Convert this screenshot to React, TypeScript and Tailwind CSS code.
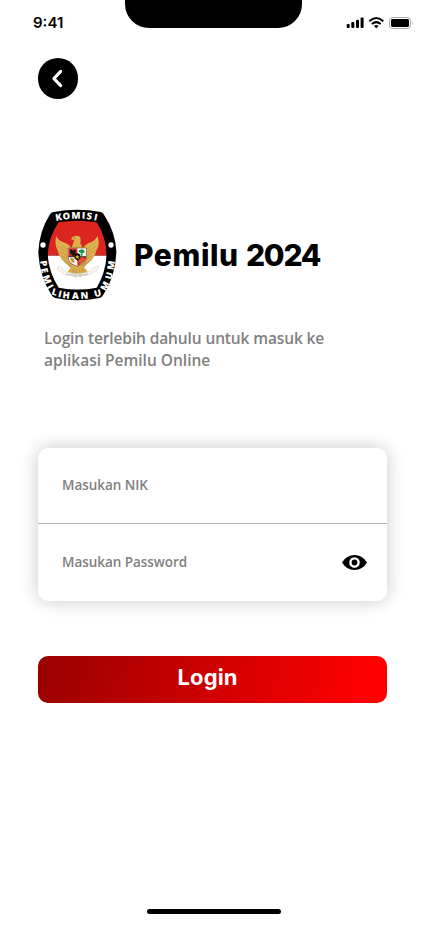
import React from "react";

type Glyph = { c: string; x: number; y: number; r: number };

const LETTERS: Glyph[] = [
  { c: "K", x: 86, y: 51, r: -10 },
  { c: "O", x: 109, y: 48, r: -6 },
  { c: "M", x: 138, y: 46, r: -1 },
  { c: "I", x: 161, y: 46, r: 3 },
  { c: "S", x: 178, y: 48, r: 7 },
  { c: "I", x: 197, y: 51, r: 12 },
  { c: "P", x: 41, y: 190, r: 82 },
  { c: "E", x: 44, y: 212, r: 78 },
  { c: "M", x: 52, y: 238, r: 70 },
  { c: "I", x: 61, y: 260, r: 60 },
  { c: "L", x: 74, y: 276, r: 18 },
  { c: "I", x: 90, y: 281, r: 12 },
  { c: "H", x: 109, y: 285, r: 7 },
  { c: "A", x: 136, y: 287, r: 1 },
  { c: "N", x: 163, y: 286, r: -4 },
  { c: "U", x: 203, y: 279, r: -14 },
  { c: "M", x: 225, y: 258, r: -62 },
  { c: "U", x: 237, y: 227, r: -73 },
  { c: "M", x: 243, y: 196, r: -80 },
];

function KpuLogo() {
  return (
    <svg className="block h-[92px] w-[80px] shrink-0" viewBox="24 27 240 276" aria-label="Komisi Pemilihan Umum">
      <defs>
        <clipPath id="shield">
          <path d="M86 67Q143 57 200 67Q229 112 230 165Q227 218 200 263Q143 275 86 263Q56 216 53 165Q55 112 86 67Z" />
        </clipPath>
        <linearGradient id="gold" x1="0" y1="0" x2="0" y2="1">
          <stop offset="0" stopColor="#e2b34a" />
          <stop offset="0.6" stopColor="#d7a84c" />
          <stop offset="1" stopColor="#c79a4c" />
        </linearGradient>
      </defs>
      <path d="M70 36Q142 22 212 36Q218 37 222 44Q256 96 259 153Q258 227 219 286Q216 292 208 294Q143 308 76 294Q69 292 65 286Q28 229 25 157Q27 95 60 43Q64 37 70 36Z" fill="#000" />
      <g clipPath="url(#shield)">
        <rect x="50" y="55" width="182" height="112" fill="#dc2420" />
        <rect x="50" y="167" width="182" height="112" fill="#fff" />
      </g>
      <circle cx="39" cy="135" r="8" fill="#fff" />
      <circle cx="243" cy="135" r="8" fill="#fff" />
      <g fill="url(#gold)">
        <path d="M79 108Q84 122 99 126L113 132Q120 138 124 144L130 128L132 120L123 118Q126 108 140 107Q152 108 152 118L151 130L158 144Q163 136 176 129Q194 124 203 108Q211 137 199 153L195 164L187 177L178 187L169 194L160 205L123 205L112 194L103 187L94 176L87 164L83 152Q72 132 79 108Z" />
        <path d="M128 195L113 215L121 219L119 228L130 226L137 233L143 227L151 232L156 226L167 227L165 218L173 214L155 194Z" />
      </g>
      <g fill="none" stroke="#efcb78" strokeWidth="1.3">
        <path d="M82 118Q96 137 118 147M80 129Q96 147 117 156M85 145Q101 159 118 166M92 160Q107 170 121 177M100 175L123 187" />
        <path d="M200 118Q185 137 164 147M202 129Q187 147 165 156M197 145Q182 159 164 166M191 160Q176 170 162 177M182 175L160 187" />
      </g>
      <g fill="none" stroke="#a97a32" strokeWidth="1">
        <path d="M83 124L113 149M84 138L117 160M91 154L119 171M99 169L122 182M199 124L169 149M198 138L165 160M190 154L163 171M182 169L160 182" />
        <path d="M132 201L128 219M140 203L137 223M148 202L150 223M155 200L160 218" />
      </g>
      <circle cx="134" cy="114" r="1.6" fill="#302012" />
      <path d="M115 144H169V177Q162 193 142 199Q121 193 115 177Z" fill="#fff" stroke="#27221c" strokeWidth="1.4" />
      <path d="M116 145H142V170H116ZM142 170H168V177Q161 191 142 198Z" fill="#e02a25" />
      <path d="M119 151L124 148L129 152L136 148L138 158L133 167L127 167L121 160Z" fill="#171717" />
      <path d="M146 156Q144 150 150 150Q155 145 161 150Q167 154 161 159H157L158 167H151L153 159Z" fill="#21934c" />
      <path d="M120 176Q125 171 130 176Q135 179 133 190L123 184Z" fill="#c3942e" />
      <path d="M146 176L159 187M152 173L163 181M147 184L154 191" stroke="#f0c25c" strokeWidth="2" />
      <path d="M115 170H169" stroke="#181818" strokeWidth="2.4" />
      <path d="M134 163L142 159L150 163L151 175L142 182L133 175Z" fill="#111" />
      <path d="M142 164L144 169H149L145 172L147 177L142 174L137 177L139 172L135 169H140Z" fill="#ebb931" />
      <path
        d="M84 198L92 201L101 212L111 217Q142 225 172 217L183 212L193 201L206 197L203 211L192 216Q182 223 171 226Q142 233 112 227Q99 224 94 216L82 209Z"
        fill="#f8f6f2"
        stroke="#cfcac0"
        strokeWidth="1.3"
      />
      <path d="M109 221Q142 230 174 221" fill="none" stroke="#8b8375" strokeWidth="3" strokeDasharray="2 1.5" />
      <g fill="#fff" className="font-['Open_Sans',sans-serif] font-extrabold">
        {LETTERS.map((g, i) => (
          <text key={i} fontSize="28" textAnchor="middle" transform={`translate(${g.x} ${g.y}) rotate(${g.r})`} dy="0.36em">
            {g.c}
          </text>
        ))}
      </g>
    </svg>
  );
}

function StatusBar() {
  return (
    <header className="flex h-[58px] items-start">
      <span className="ml-[33px] mt-[13px] w-[92px] font-['Inter',sans-serif] text-[15px] font-semibold leading-5">9:41</span>
      <div className="h-7 w-[177px] rounded-b-[24px] bg-black" />
      <svg className="ml-[44px] mt-4 h-[14px] w-[67px] shrink-0" viewBox="0 0 67 14">
        <rect x=".7" y="8" width="3" height="4" rx="1" />
        <rect x="5.3" y="6" width="3" height="6" rx="1" />
        <rect x="10" y="3.8" width="3" height="8.2" rx="1" />
        <rect x="14.6" y="1.4" width="3" height="10.6" rx="1" />
        <g fill="none" stroke="#000" strokeWidth="2">
          <path d="M23.3 5.2Q30.3-1.2 37.3 5.2M25.9 8Q30.3 4.2 34.7 8" />
        </g>
        <path d="M28 10Q30.3 8.2 32.6 10L30.3 12.2Z" />
        <rect x="43.5" y="1.5" width="21" height="11" rx="3" fill="none" stroke="#aaa" />
        <rect x="45" y="3" width="18" height="8" rx="1.4" />
        <path d="M66 5.5Q67.5 7 66 8.5Z" fill="#999" />
      </svg>
    </header>
  );
}

export default function App() {
  return (
    <main className="flex h-[926px] w-[428px] flex-col overflow-hidden bg-white text-black">
      <StatusBar />
      <button aria-label="Kembali" className="ml-[38px] flex h-[41px] w-10 items-center justify-center rounded-full bg-black">
        <svg className="h-[41px] w-10" viewBox="0 0 40 41" fill="none" stroke="#fff" strokeWidth="3" strokeLinecap="round" strokeLinejoin="round">
          <path d="M22.7 13.4L15.9 20.6L22.7 27.6" />
        </svg>
      </button>

      <section className="ml-[38px] mt-[110px] flex h-[92px] items-center">
        <KpuLogo />
        <h1 className="ml-4 whitespace-nowrap font-['Inter',sans-serif] text-[30px] font-extrabold leading-[46px]">
          <span className="tracking-[0.6px]">Pemilu </span>
          <span className="tracking-[-1.2px]">2024</span>
        </h1>
      </section>

      <p className="ml-[44px] mt-[26px] whitespace-nowrap font-['Open_Sans',sans-serif] text-[15.5px] font-semibold leading-[22px] text-[#808080]">
        <span className="tracking-[-0.12px]">Login terlebih dahulu untuk masuk ke</span>
        <br />
        aplikasi Pemilu Online
      </p>

      <form className="ml-[38px] mt-[77px] flex h-[153px] w-[349px] flex-col rounded-[10px] bg-white font-['Open_Sans',sans-serif] text-[13.5px] font-semibold tracking-[-0.05px] text-[#808080] shadow-[0_0_18px_rgba(0,0,0,0.22)]">
        <label className="flex h-[76px] items-center border-b border-[#b3b3b3] pl-6">Masukan NIK</label>
        <label className="flex flex-1 items-center justify-between pl-6 pr-5">
          Masukan Password
          <svg className="h-[15px] w-[25px]" viewBox="0 0 25 15" fill="none">
            <path d="M0 7.5Q4.5 0 12.5 0T25 7.5Q20.5 15 12.5 15T0 7.5Z" fill="#000" />
            <circle cx="12.5" cy="7.5" r="4.1" fill="#000" stroke="#fff" strokeWidth="2.4" />
          </svg>
        </label>
      </form>

      <button className="ml-[38px] mt-[55px] flex h-[47px] w-[349px] items-center justify-center rounded-[10px] bg-[linear-gradient(105deg,#980000_0%,#ff0000_94%)] pb-1 pr-[10px] font-['Inter',sans-serif] text-[22px] font-bold tracking-[0.1px] text-white">
        Login
      </button>
      <div className="ml-[147px] mt-[206px] h-[5px] w-[134px] rounded-full bg-black" />
    </main>
  );
}
